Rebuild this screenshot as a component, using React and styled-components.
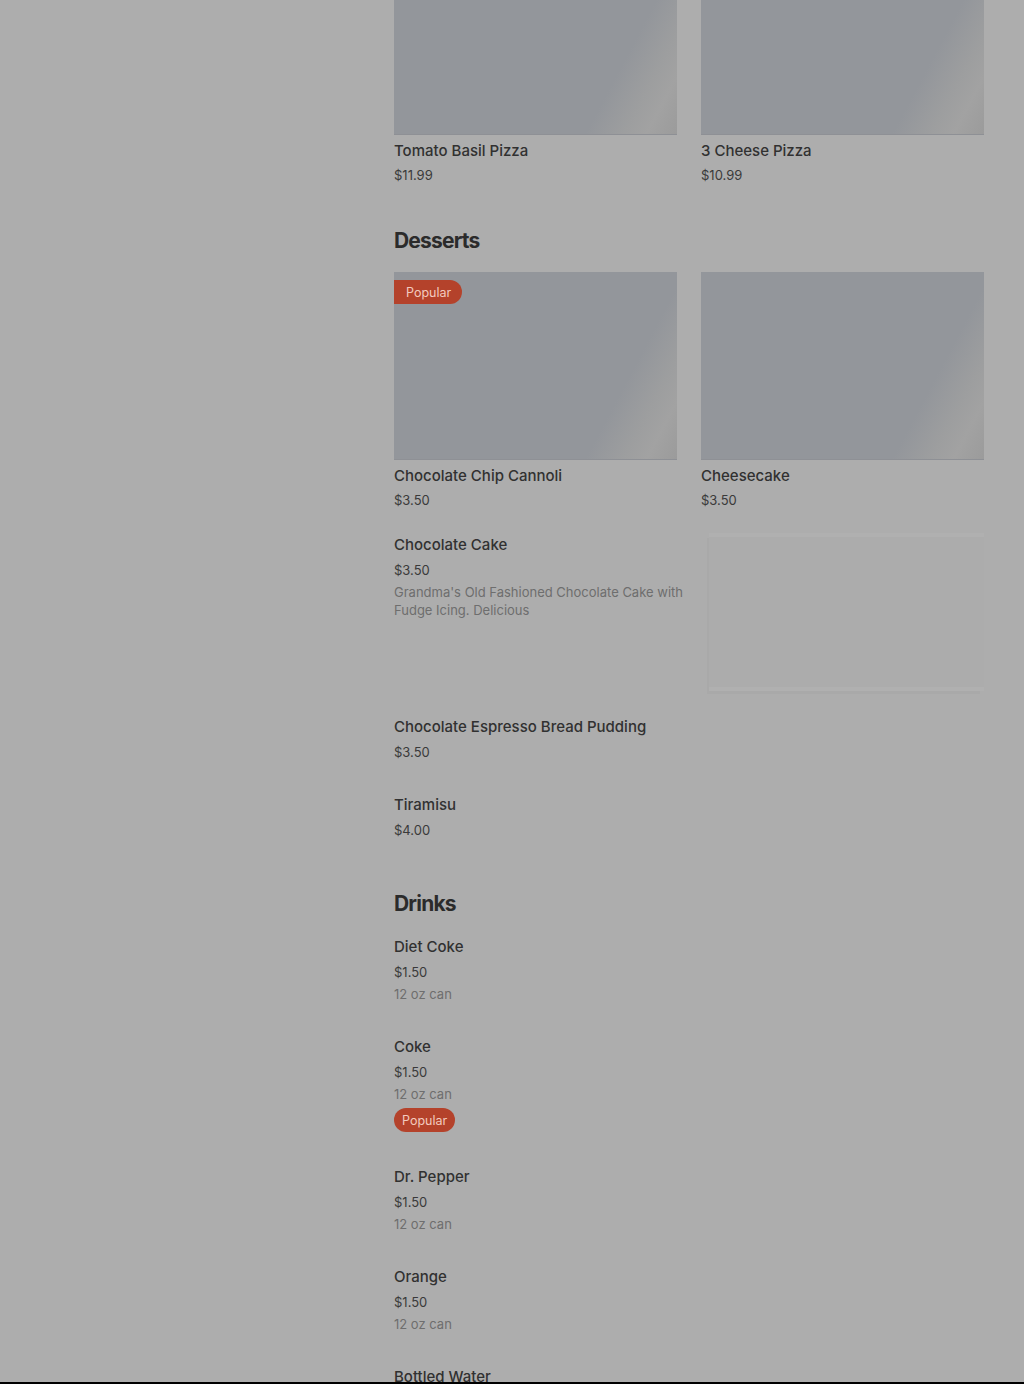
import React from "react";
import styled, { createGlobalStyle } from "styled-components";

const Global = createGlobalStyle`
  html, body { margin: 0; padding: 0; background: #adadad; }
  body { font-family: Inter, "Noto Sans", sans-serif; color: #2f2f2f; overflow: hidden; height: 1384px; }
  * { box-sizing: border-box; }
`;

const Page = styled.div`
  display: grid;
  grid-template-columns: 394px 590px;
  padding-right: 40px;
  height: 1384px;
  overflow: hidden;
  background: #adadad;
`;

const Sidebar = styled.aside``;

const Main = styled.main`
  margin-top: -53px;
  display: flex;
  flex-direction: column;
`;

const Section = styled.section`
  display: flex;
  flex-direction: column;
  & + & { margin-top: 19px; }
`;

const Heading = styled.h2`
  margin: 0 0 17px;
  font-size: 21px;
  line-height: 28px;
  font-weight: 700;
  letter-spacing: -0.8px;
  color: #2b2b2b;
`;

const Grid = styled.div`
  display: grid;
  grid-template-columns: 1fr 1fr;
  column-gap: 24px;
  margin-bottom: 24px;
`;

const Card = styled.div`
  display: flex;
  flex-direction: column;
`;

const Photo = styled.div`
  position: relative;
  height: 188px;
  background: linear-gradient(118deg, #93969b 0%, #93969b 76%, #9d9e9f 86%, #a2a2a2 92%, #9b9b9b 100%);
  border-bottom: 1px solid #8e9095;
`;

const Title = styled.div`
  font-size: 15px;
  font-weight: 500;
  color: #313131;
  line-height: ${(p) => (p.$card ? "22px" : "24px")};
  margin-top: ${(p) => (p.$card ? "5px" : "0")};
`;

const Price = styled.div`
  font-size: 13px;
  line-height: 18px;
  margin-top: 4px;
  color: #3a3a3a;
`;

const Desc = styled.p`
  margin: 4px 0 0;
  font-size: 13px;
  line-height: 18px;
  color: #6e6e6e;
`;

const Badge = styled.span`
  display: inline-flex;
  align-items: center;
  height: 24px;
  font-size: 12.5px;
  color: #f3cabf;
  background: #b4422b;
  ${(p) =>
    p.$onPhoto
      ? `position: absolute; top: 8px; left: 0; padding: 0 11px 0 12px; border-radius: 0 12px 12px 0;`
      : `align-self: flex-start; margin-top: 5px; padding: 0 8px; border-radius: 12px;`}
`;

const Item = styled.div`
  display: flex;
  gap: 16px;
  padding-bottom: ${(p) => p.$pb || 32}px;
`;

const ItemText = styled.div`
  flex: 1;
  display: flex;
  flex-direction: column;
  min-width: 0;
`;

const Thumb = styled.div`
  width: 275px;
  height: 158px;
  flex-shrink: 0;
  background: #acacac;
  border-top: 4px solid #b0b0b0;
  border-bottom: 4px solid #b0b0b0;
  box-shadow: -3px 4px 0 -1px #a9a9a9;
`;

const BottomLine = styled.div`
  position: fixed;
  left: 0;
  right: 0;
  bottom: 0;
  height: 2px;
  background: #000;
`;

const GridCard = ({ name, price, popular }) => (
  <Card>
    <Photo>{popular && <Badge $onPhoto>Popular</Badge>}</Photo>
    <Title $card>{name}</Title>
    <Price>{price}</Price>
  </Card>
);

const ListItem = ({ name, price, desc, popular, thumb, pb }) => (
  <Item $pb={pb}>
    <ItemText>
      <Title>{name}</Title>
      <Price>{price}</Price>
      {desc && <Desc>{desc}</Desc>}
      {popular && <Badge>Popular</Badge>}
    </ItemText>
    {thumb && <Thumb />}
  </Item>
);

export default function App() {
  return (
    <>
      <Global />
      <Page>
        <Sidebar />
        <Main>
          <Section>
            <Grid>
              <GridCard name="Tomato Basil Pizza" price="$11.99" />
              <GridCard name="3 Cheese Pizza" price="$10.99" />
            </Grid>
          </Section>
          <Section>
            <Heading>Desserts</Heading>
            <Grid>
              <GridCard name="Chocolate Chip Cannoli" price="$3.50" popular />
              <GridCard name="Cheesecake" price="$3.50" />
            </Grid>
            <ListItem
              name="Chocolate Cake"
              price="$3.50"
              desc="Grandma's Old Fashioned Chocolate Cake with Fudge Icing. Delicious"
              thumb
              pb={24}
            />
            <ListItem name="Chocolate Espresso Bread Pudding" price="$3.50" />
            <ListItem name="Tiramisu" price="$4.00" />
          </Section>
          <Section>
            <Heading>Drinks</Heading>
            <ListItem name="Diet Coke" price="$1.50" desc="12 oz can" />
            <ListItem name="Coke" price="$1.50" desc="12 oz can" popular pb={33} />
            <ListItem name="Dr. Pepper" price="$1.50" desc="12 oz can" />
            <ListItem name="Orange" price="$1.50" desc="12 oz can" />
            <ListItem name="Bottled Water" price="$1.50" />
          </Section>
        </Main>
      </Page>
      <BottomLine />
    </>
  );
}
